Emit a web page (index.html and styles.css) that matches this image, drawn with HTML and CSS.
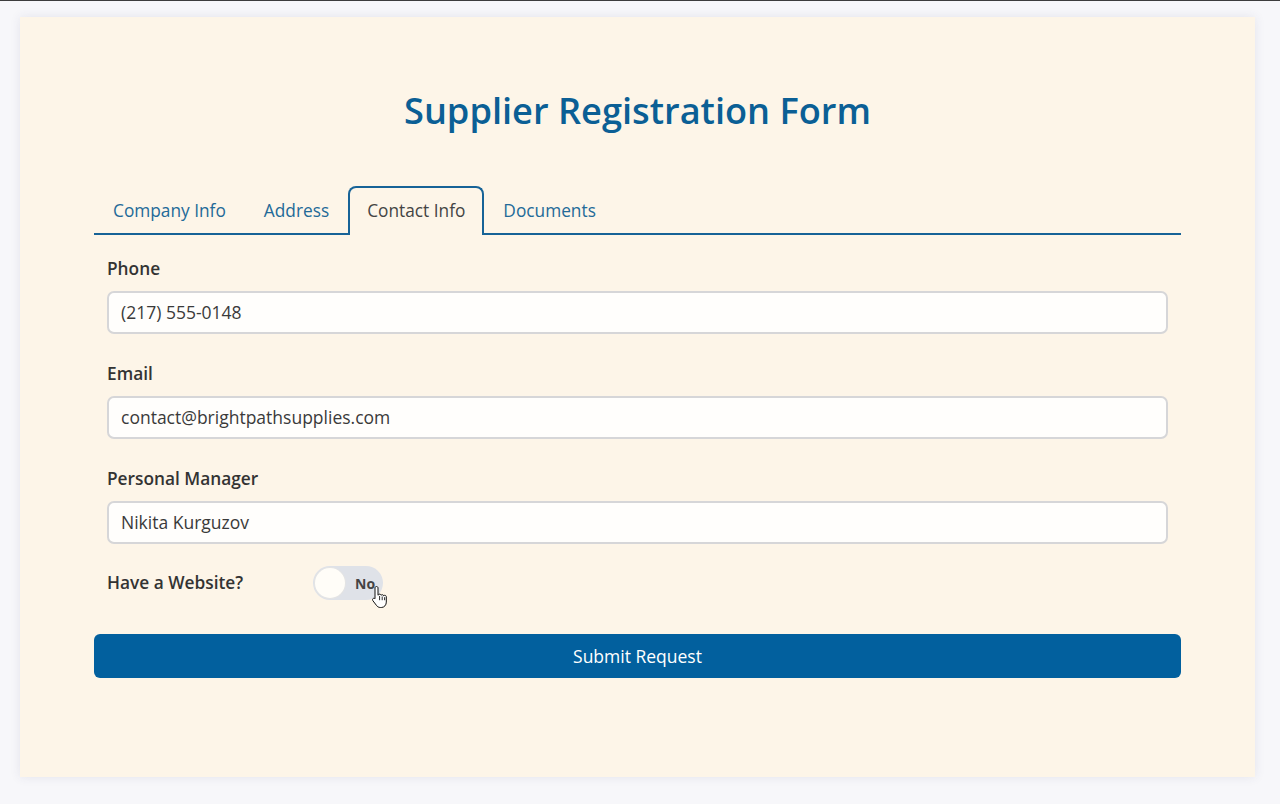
FILE: index.html
```html
<!DOCTYPE html>
<html lang="en">
<head>
<meta charset="utf-8">
<title>Supplier Registration Form</title>
<link rel="stylesheet" href="styles.css">
</head>
<body>
<div class="page">
  <div class="card">
    <h1 class="title">Supplier Registration Form</h1>
    <div class="content">
      <div class="tabs">
        <div class="tab">Company Info</div>
        <div class="tab">Address</div>
        <div class="tab active">Contact Info</div>
        <div class="tab">Documents</div>
      </div>
      <div class="panel">
        <div class="field">
          <label class="label">Phone</label>
          <div class="input">(217) 555-0148</div>
        </div>
        <div class="field">
          <label class="label">Email</label>
          <div class="input">contact@brightpathsupplies.com</div>
        </div>
        <div class="field">
          <label class="label">Personal Manager</label>
          <div class="input">Nikita Kurguzov</div>
        </div>
        <div class="switch-row">
          <span class="label switch-label">Have a Website?</span>
          <div class="switch">
            <span class="knob"></span>
            <span class="switch-text">No</span>
            <svg class="cursor" width="18" height="24" viewBox="0 0 18 24" aria-hidden="true">
              <path d="M5.5 1.5c.9 0 1.5.6 1.5 1.5v7.2l.3-.1c.2-.6.8-1 1.4-1 .7 0 1.3.5 1.4 1.2.3-.4.7-.6 1.2-.6.7 0 1.2.5 1.4 1.1.3-.3.7-.5 1.1-.5.9 0 1.5.7 1.5 1.600v5.2c0 2.9-2 5.4-5 5.4H9.4c-1.7 0-3-.8-4-2.2L1.8 15.6c-.5-.7-.4-1.6.3-2.1.6-.4 1.4-.3 1.9.3l0 0V3c0-.9.6-1.5 1.5-1.5z" fill="#fff" stroke="#111" stroke-width="1"/>
              <path d="M8.6 11v4.2M11.2 11.5v3.7M13.6 12.2v3" stroke="#111" stroke-width="0.9" fill="none"/>
            </svg>
          </div>
        </div>
      </div>
      <button class="submit">Submit Request</button>
    </div>
  </div>
</div>
</body>
</html>
```
FILE: styles.css
```css
html, body {
  margin: 0;
  padding: 0;
}
body {
  background: #f7f7fa;
  border-top: 1px solid #3d3d3d;
  font-family: "Segoe UI", "Open Sans", "Noto Sans", sans-serif;
  color: #333;
}
.page {
  padding: 16px 25px 27px 20px;
}
.card {
  background: #fdf5e8;
  box-shadow: 0 0 10px rgba(60, 60, 110, 0.10);
  padding: 60px 74px 99px 74px;
  height: 760px;
  box-sizing: border-box;
}
.title {
  margin: 0;
  text-align: center;
  font-size: 36.2px;
  line-height: 66px;
  font-weight: 600;
  color: #0b5f95;
  letter-spacing: 0;
}
.content {
  margin-top: 43px;
}
.tabs {
  display: flex;
  border-bottom: 2px solid #176397;
  height: 47px;
}
.tab {
  padding: 0 17px;
  border: 2px solid transparent;
  border-bottom: none;
  font-size: 17.3px;
  line-height: 45px;
  color: #236a98;
  border-radius: 8px 8px 0 0;
}
.tab.active {
  border-color: #176397;
  background: #fdf5e8;
  color: #444;
  box-sizing: border-box;
  margin-bottom: -2px;
  line-height: 45px;
  height: 49px;
}
.panel {
  padding: 22px 13px 0 13px;
}
.field {
  margin-bottom: 28px;
}
.label {
  display: block;
  font-size: 17.3px;
  font-weight: 600;
  line-height: 24px;
  color: #333;
  margin-bottom: 10px;
}
.input {
  height: 43px;
  box-sizing: border-box;
  border: 2px solid #d6d6d8;
  border-radius: 7px;
  background: #fffefc;
  padding: 0 12px;
  font-size: 17.5px;
  line-height: 39px;
  color: #3a3a3a;
}
.switch-row {
  display: flex;
  align-items: center;
  margin-top: -6px;
  height: 34px;
}
.switch-label {
  margin: 0;
  width: 206px;
}
.switch {
  position: relative;
  width: 70px;
  height: 34px;
  border-radius: 17px;
  background: #dfe2e8;
  box-sizing: border-box;
  display: flex;
  align-items: center;
}
.knob {
  width: 30px;
  height: 30px;
  margin-left: 2px;
  border-radius: 50%;
  background: #fffdf8;
  box-shadow: 0 0 0 1px #e4e4e4;
}
.switch-text {
  margin-left: 10px;
  font-size: 14px;
  font-weight: 700;
  color: #444;
}
.cursor {
  position: absolute;
  left: 58px;
  top: 19px;
}
.submit {
  display: block;
  width: 100%;
  height: 44px;
  margin-top: 34px;
  border: none;
  border-radius: 6px;
  background: #02609e;
  color: #fff;
  font-family: inherit;
  font-size: 17.5px;
}
```
